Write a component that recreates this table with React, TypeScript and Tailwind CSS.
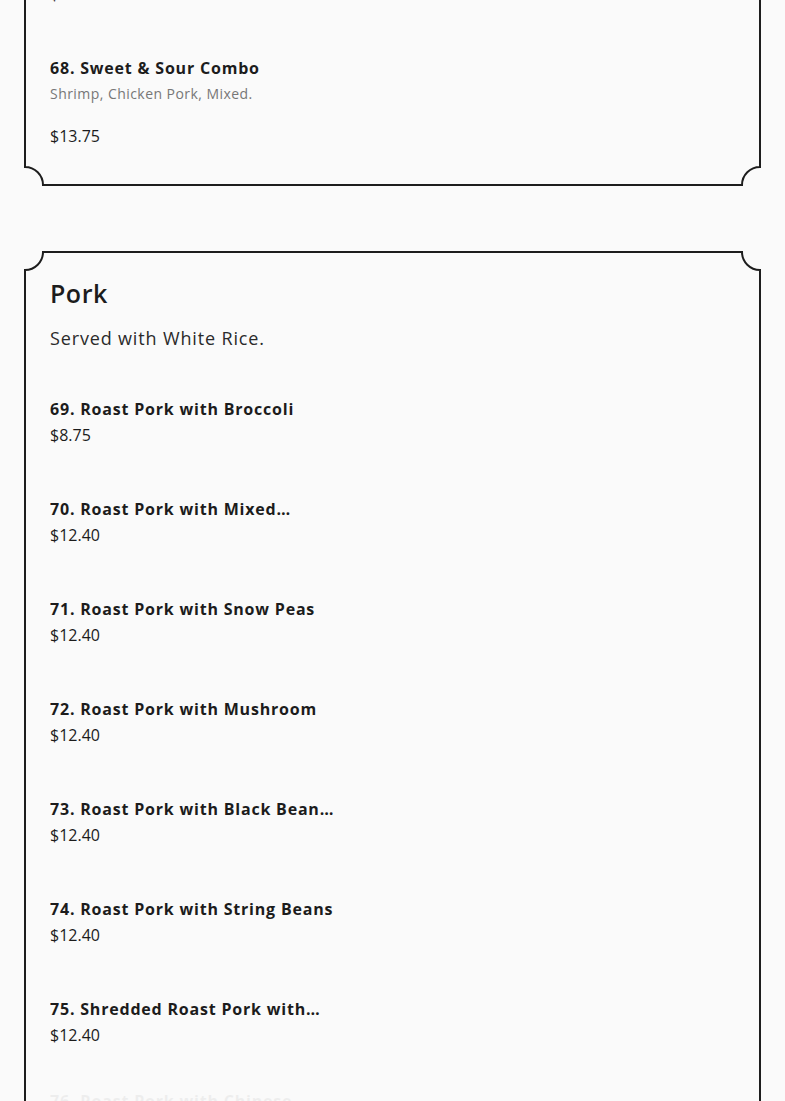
type Pos = 'tl' | 'tr' | 'bl' | 'br';

const cornerBox: Record<Pos, string> = {
  tl: '-top-0.5 -left-0.5',
  tr: '-top-0.5 -right-0.5',
  bl: '-bottom-0.5 -left-0.5',
  br: '-bottom-0.5 -right-0.5',
};

const cornerPath: Record<Pos, string> = {
  tl: 'M1 20 L1 19 A18 18 0 0 0 19 1 L20 1',
  tr: 'M0 1 L1 1 A18 18 0 0 0 19 19 L19 20',
  bl: 'M1 0 L1 1 A18 18 0 0 1 19 19 L20 19',
  br: 'M19 0 L19 1 A18 18 0 0 0 1 19 L0 19',
};

const Corner = ({ pos }: { pos: Pos }) => (
  <div className={`absolute ${cornerBox[pos]} w-5 h-5 bg-[#fafafa]`}>
    <svg width="20" height="20" viewBox="0 0 20 20" fill="none">
      <path d={cornerPath[pos]} stroke="#1d1d1d" strokeWidth="2" />
    </svg>
  </div>
);

type Item = { name: string; desc?: string; price: string };

const MenuItem = ({ item, faded }: { item: Item; faded?: boolean }) => (
  <div className={faded ? 'opacity-[0.05] -translate-y-2' : ''}>
    <h3 className="line-clamp-1 max-w-[290px] text-base font-bold leading-6 tracking-[0.8px] text-[#1c1c1c]">
      {item.name}
    </h3>
    {item.desc && (
      <p className="mt-0.5 text-sm leading-6 tracking-[0.45px] text-[#777777]">{item.desc}</p>
    )}
    <p className={`${item.desc ? 'mt-[18px]' : 'mt-0.5'} text-base leading-6 text-[#1c1c1c]`}>
      {item.price}
    </p>
  </div>
);

const Card = ({ children }: { children: React.ReactNode }) => (
  <section className="relative border-2 border-[#1d1d1d] bg-[#fafafa] px-6 pt-6 pb-9">
    <Corner pos="tl" />
    <Corner pos="tr" />
    <Corner pos="bl" />
    <Corner pos="br" />
    {children}
  </section>
);

const sweetSour: Item[] = [
  { name: '67. Sweet & Sour Shrimp', price: '$13.75' },
  { name: '68. Sweet & Sour Combo', desc: 'Shrimp, Chicken Pork, Mixed.', price: '$13.75' },
];

const pork: Item[] = [
  { name: '69. Roast Pork with Broccoli', price: '$8.75' },
  { name: '70. Roast Pork with Mixed Vegetables', price: '$12.40' },
  { name: '71. Roast Pork with Snow Peas', price: '$12.40' },
  { name: '72. Roast Pork with Mushroom', price: '$12.40' },
  { name: '73. Roast Pork with Black Bean Sauce', price: '$12.40' },
  { name: '74. Roast Pork with String Beans', price: '$12.40' },
  { name: '75. Shredded Roast Pork with Garlic Sauce', price: '$12.40' },
  { name: '76. Roast Pork with Chinese Vegetables', price: '$12.40' },
];

export default function App() {
  return (
    <div className="min-h-screen overflow-hidden bg-[#fafafa] px-6 font-['Open_Sans',sans-serif]">
      <div className="-mt-[70px] flex flex-col gap-[65px]">
        <Card>
          <div className="flex flex-col gap-[50px]">
            {sweetSour.map((it) => (
              <MenuItem key={it.name} item={it} />
            ))}
          </div>
        </Card>
        <Card>
          <h2 className="text-[25px] font-semibold leading-8 tracking-[0.5px] text-[#1c1c1c]">Pork</h2>
          <p className="mt-[15px] text-lg leading-7 tracking-[0.85px] text-[#2a2a2a]">
            Served with White Rice.
          </p>
          <div className="mt-[45px] flex flex-col gap-[50px]">
            {pork.map((it, i) => (
              <MenuItem key={it.name} item={it} faded={i === pork.length - 1} />
            ))}
          </div>
        </Card>
      </div>
    </div>
  );
}
